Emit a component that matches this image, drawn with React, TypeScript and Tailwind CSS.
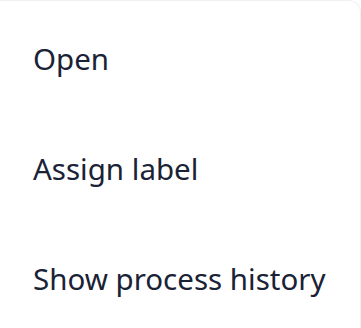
import React from "react";

const items = ["Open", "Assign label", "Show process history"];

export default function App() {
  return (
    <div className="w-[361px] h-[328px] bg-white overflow-hidden">
      <div className="-ml-4 rounded-tr-xl border-t border-r border-[#f0f0f2] h-[340px] bg-white">
        {items.map((t) => (
          <div
            key={t}
            className="h-[110px] flex items-center pl-[49px] pt-[5px] text-[29.5px] leading-none text-[#1a2236]"
            style={{ fontFamily: '"Noto Sans", "Open Sans", sans-serif' }}
          >
            {t}
          </div>
        ))}
      </div>
    </div>
  );
}
